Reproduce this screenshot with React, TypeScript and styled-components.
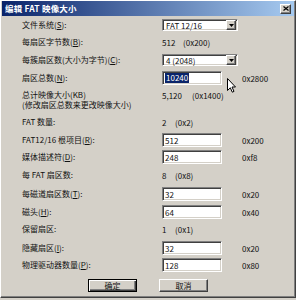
import React from "react";
import styled, { createGlobalStyle } from "styled-components";

const Global = createGlobalStyle`
  html, body { margin: 0; padding: 0; background: #d4d0c8; }
  body { width: 296px; height: 300px; overflow: hidden; font-family: "Noto Sans CJK SC", "Noto Sans", sans-serif; }
`;

const Window = styled.div`
  position: relative;
  width: 296px;
  height: 298px;
  box-sizing: border-box;
  background: #d4d0c8;
  border-left: 1px solid #ffffff;
  border-top: 1px solid #ffffff;
  border-right: 1px solid #404040;
  border-bottom: 1px solid #404040;
  box-shadow: inset -1px -1px #808080;
  display: flex;
  flex-direction: column;
`;

const TitleBar = styled.div`
  height: 15px;
  margin: 0 1px;
  background: linear-gradient(to right, #0a246a, #a6caf0);
  display: flex;
  align-items: center;
  justify-content: space-between;
  padding: 0 3px 0 3px;
`;

const TitleText = styled.span`
  color: #ffffff;
  font-weight: bold;
  font-size: 8.5px;
  line-height: 15px;
  letter-spacing: 0.2px;
`;

const CloseButton = styled.div`
  width: 9px;
  height: 8px;
  background: #d4d0c8;
  border: 1px solid;
  border-color: #ffffff #404040 #404040 #ffffff;
  box-shadow: inset -1px -1px #808080;
  display: flex;
  align-items: center;
  justify-content: center;
`;

const Body = styled.div`
  display: flex;
  flex-direction: column;
  padding-left: 21px;
`;

const Row = styled.div<{ $top: number; $h: number }>`
  display: grid;
  grid-template-columns: 140px 70px auto;
  align-items: center;
  margin-top: ${(p) => p.$top}px;
  height: ${(p) => p.$h}px;
  font-size: 8px;
  color: #111;
`;

const Label = styled.span`
  white-space: nowrap;
  line-height: 10px;
`;

const LabelBlock = styled.div`
  display: flex;
  flex-direction: column;
  line-height: 10px;
  white-space: nowrap;
`;

const Value = styled.span`
  white-space: nowrap;
  grid-column: 2 / 4;
  display: flex;
`;

const Num = styled.span<{ $w: number }>`
  display: inline-block;
  width: ${(p) => p.$w}px;
`;

const Hex = styled.span`
  padding-left: 10px;
  white-space: nowrap;
`;

const Input = styled.div<{ $w: number }>`
  position: relative;
  width: ${(p) => p.$w}px;
  height: 14px;
  box-sizing: border-box;
  background: #ffffff;
  border: 1px solid;
  border-color: #808080 #ffffff #ffffff #808080;
  box-shadow: inset 1px 1px #404040, inset -1px -1px #d4d0c8;
  display: flex;
  align-items: center;
  padding-left: 2px;
  font-size: 8px;
  color: #111;
`;

const Selected = styled.span`
  background: #0a246a;
  color: #ffffff;
  line-height: 10px;
  padding: 0 1px;
`;

const Combo = styled(Input)`
  height: 12px;
  padding-left: 3px;
  justify-content: space-between;
  padding-right: 1px;
`;

const DropButton = styled.div`
  width: 8px;
  height: 8px;
  background: #d4d0c8;
  border: 1px solid;
  border-color: #ffffff #404040 #404040 #ffffff;
  box-shadow: inset -1px -1px #808080;
  display: flex;
  align-items: center;
  justify-content: center;
`;

const ButtonRow = styled.div`
  display: flex;
  gap: 22px;
  margin-top: 7px;
  padding-left: 66px;
`;

const Button = styled.div<{ $default?: boolean }>`
  width: 49px;
  height: 13px;
  box-sizing: border-box;
  background: #d4d0c8;
  border: 1px solid;
  border-color: ${(p) => (p.$default ? "#000000" : "#ffffff #404040 #404040 #ffffff")};
  box-shadow: ${(p) =>
    p.$default
      ? "inset 1px 1px #ffffff, inset -1px -1px #404040, inset -2px -2px #808080"
      : "inset -1px -1px #808080"};
  display: flex;
  align-items: center;
  justify-content: center;
  font-size: 8px;
  color: #111;
`;

const Cursor = styled.svg`
  position: absolute;
  left: 226px;
  top: 77px;
`;

const U = styled.span`
  text-decoration: underline;
`;

const Arrow = () => (
  <svg width="5" height="3" viewBox="0 0 5 3">
    <path d="M0 0h5L2.5 3z" fill="#000" />
  </svg>
);

type Spec =
  | { kind: "combo"; top: number; label: React.ReactNode; text: string }
  | { kind: "value"; top: number; label: React.ReactNode; num: string; numW: number; hex: string }
  | { kind: "input"; top: number; label: React.ReactNode; text: React.ReactNode; hex: string };

const rows: Spec[] = [
  { kind: "combo", top: 3, label: <>文件系统(<U>S</U>):</>, text: "FAT 12/16" },
  { kind: "value", top: 5, label: <>每扇区字节数(<U>B</U>):</>, num: "512", numW: 21, hex: "(0x200)" },
  { kind: "combo", top: 6, label: <>每簇扇区数(大小为字节)(<U>C</U>):</>, text: "4 (2048)" },
  { kind: "input", top: 5, label: <>扇区总数(<U>N</U>):</>, text: <Selected>10240</Selected>, hex: "0x2800" },
];

const rows2: Spec[] = [
  { kind: "value", top: 6, label: <>FAT 数量:</>, num: "2", numW: 13, hex: "(0x2)" },
  { kind: "input", top: 5, label: <>FAT12/16 根项目(<U>R</U>):</>, text: "512", hex: "0x200" },
  { kind: "input", top: 3, label: <>媒体描述符(<U>D</U>):</>, text: "248", hex: "0xf8" },
  { kind: "value", top: 5, label: <>每 FAT 扇区数:</>, num: "8", numW: 13, hex: "(0x8)" },
  { kind: "input", top: 6, label: <>每磁道扇区数(<U>T</U>):</>, text: "32", hex: "0x20" },
  { kind: "input", top: 4, label: <>磁头(<U>H</U>):</>, text: "64", hex: "0x40" },
  { kind: "value", top: 4, label: <>保留扇区:</>, num: "1", numW: 13, hex: "(0x1)" },
  { kind: "input", top: 6, label: <>隐藏扇区(<U>I</U>):</>, text: "32", hex: "0x20" },
  { kind: "input", top: 3, label: <>物理驱动器数量(<U>P</U>):</>, text: "128", hex: "0x80" },
];

const renderRow = (r: Spec, i: number) => {
  if (r.kind === "combo") {
    return (
      <Row key={i} $top={r.top} $h={12}>
        <Label>{r.label}</Label>
        <Value>
          <Combo $w={76}>
            <span>{r.text}</span>
            <DropButton>
              <Arrow />
            </DropButton>
          </Combo>
        </Value>
      </Row>
    );
  }
  if (r.kind === "value") {
    return (
      <Row key={i} $top={r.top} $h={12}>
        <Label>{r.label}</Label>
        <Value>
          <Num $w={r.numW}>{r.num}</Num>
          <span>{r.hex}</span>
        </Value>
      </Row>
    );
  }
  return (
    <Row key={i} $top={r.top} $h={14}>
      <Label>{r.label}</Label>
      <Input $w={60}>{r.text}</Input>
      <Hex>{r.hex}</Hex>
    </Row>
  );
};

export default function App() {
  return (
    <>
      <Global />
      <Window>
        <TitleBar>
          <TitleText>编辑 FAT 映像大小</TitleText>
          <CloseButton>
            <svg width="6" height="5" viewBox="0 0 6 5">
              <path d="M0.5 0.5L5.5 4.5M5.5 0.5L0.5 4.5" stroke="#000" strokeWidth="1.2" />
            </svg>
          </CloseButton>
        </TitleBar>
        <Body>
          {rows.map(renderRow)}
          <Row $top={5} $h={20}>
            <LabelBlock>
              <span>总计映像大小(KB)</span>
              <span>(修改扇区总数来更改映像大小)</span>
            </LabelBlock>
            <Value style={{ alignSelf: "start" }}>
              <Num $w={30}>5,120</Num>
              <span>(0x1400)</span>
            </Value>
          </Row>
          {rows2.map(renderRow)}
          <ButtonRow>
            <Button $default>确定</Button>
            <Button>取消</Button>
          </ButtonRow>
        </Body>
        <Cursor width="9" height="15" viewBox="0 0 9 15">
          <path d="M0.5 0.5V12.5L3.3 9.8L5.3 14.2L7 13.4L5 9H8.5Z" fill="#fff" stroke="#000" strokeWidth="1" strokeLinejoin="miter" />
        </Cursor>
      </Window>
    </>
  );
}
